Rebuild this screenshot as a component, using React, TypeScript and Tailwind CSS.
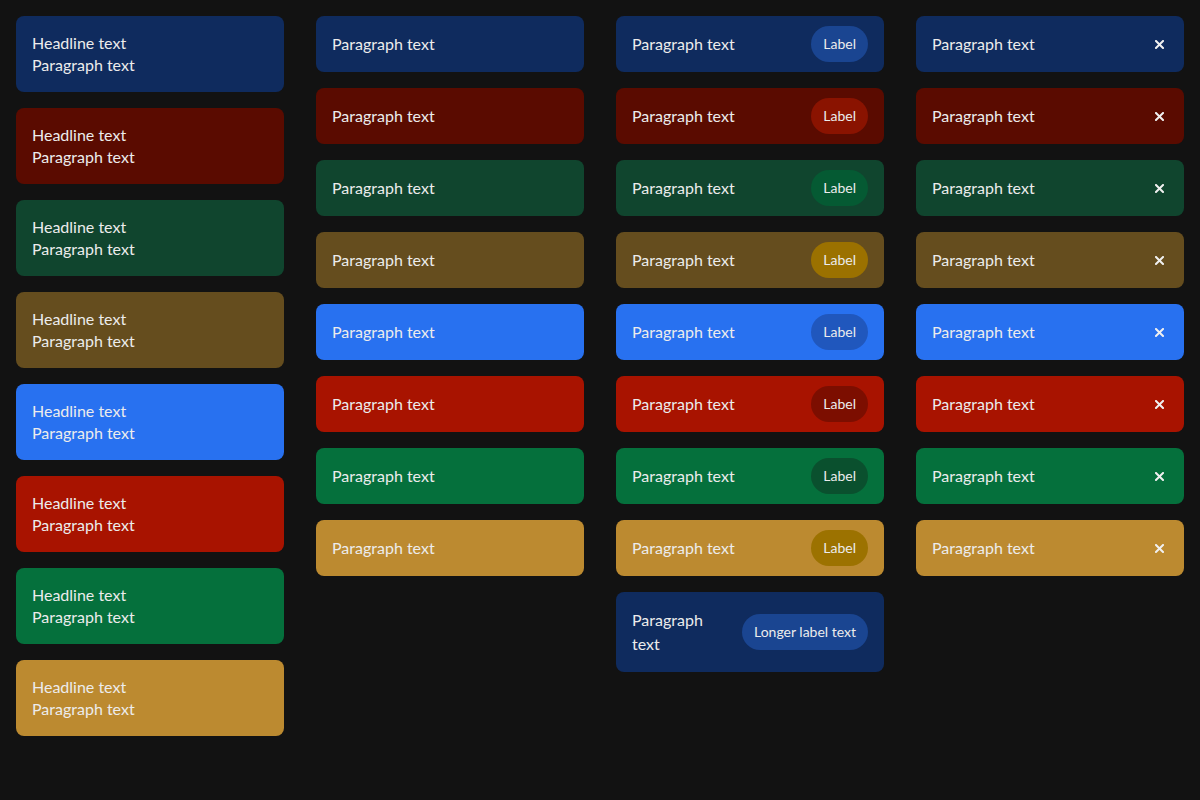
import React from "react";

type V = { bg: string; label: string };

const variants: V[] = [
  { bg: "bg-[#0f2b5e]", label: "bg-[#1a4591]" },
  { bg: "bg-[#5a0b00]", label: "bg-[#8a1300]" },
  { bg: "bg-[#10452e]", label: "bg-[#055a33]" },
  { bg: "bg-[#654d1e]", label: "bg-[#9b7100]" },
  { bg: "bg-[#2871f0]", label: "bg-[#2057bd]" },
  { bg: "bg-[#a81300]", label: "bg-[#7c0e00]" },
  { bg: "bg-[#05703c]", label: "bg-[#0a502e]" },
  { bg: "bg-[#bc8a30]", label: "bg-[#9c7200]" },
];

function Close() {
  return (
    <span className="w-[18px] h-6 flex items-center justify-center shrink-0">
      <svg width="9" height="9" viewBox="0 0 9 9">
        <path d="M1 1L8 8M8 1L1 8" stroke="#f0f0f0" strokeWidth="2" strokeLinecap="square" />
      </svg>
    </span>
  );
}

export default function App() {
  return (
    <div
      className="min-h-[800px] w-[1200px] bg-[#121212] p-4 text-[#ececec] text-base"
      style={{ fontFamily: "Lato, 'Noto Sans', sans-serif" }}
    >
      <div className="grid grid-cols-4 gap-8 items-start">
        <div className="flex flex-col gap-4">
          {variants.map((v, i) => (
            <div key={i} className={`${v.bg} rounded-lg px-4 py-4 leading-[22px]`}>
              <div>Headline text</div>
              <div>Paragraph text</div>
            </div>
          ))}
        </div>
        <div className="flex flex-col gap-4">
          {variants.map((v, i) => (
            <div key={i} className={`${v.bg} rounded-lg px-4 py-4 leading-6`}>
              Paragraph text
            </div>
          ))}
        </div>
        <div className="flex flex-col gap-4">
          {variants.map((v, i) => (
            <div key={i} className={`${v.bg} rounded-lg px-4 h-14 flex items-center justify-between gap-4`}>
              <span className="leading-6">Paragraph text</span>
              <span className={`${v.label} rounded-full h-9 px-3 flex items-center text-sm`}>Label</span>
            </div>
          ))}
          <div className="bg-[#0f2b5e] rounded-lg px-4 py-4 flex items-center justify-between gap-4">
            <span className="leading-6 flex-1 min-w-0">Paragraph text</span>
            <span className="bg-[#1a4591] rounded-full h-9 px-3 flex items-center text-sm whitespace-nowrap shrink-0">
              Longer label text
            </span>
          </div>
        </div>
        <div className="flex flex-col gap-4">
          {variants.map((v, i) => (
            <div key={i} className={`${v.bg} rounded-lg px-4 h-14 flex items-center justify-between gap-4`}>
              <span className="leading-6">Paragraph text</span>
              <Close />
            </div>
          ))}
        </div>
      </div>
    </div>
  );
}
